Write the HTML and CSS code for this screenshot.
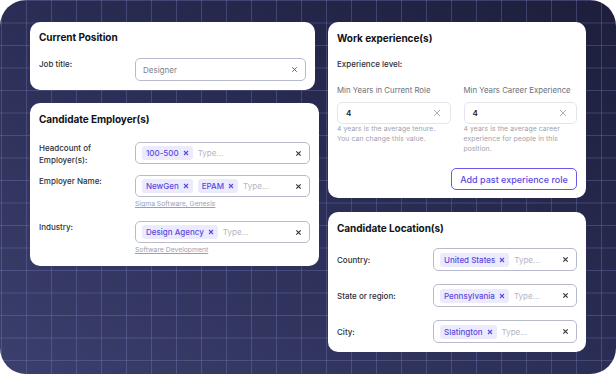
FILE: index.html
```html
<!DOCTYPE html>
<html>
<head>
<meta charset="utf-8">
<link rel="stylesheet" href="styles.css">
</head>
<body>
<div class="frame">
  <div class="col col-left">
    <section class="card card-pos">
      <h2 class="title">Current Position</h2>
      <div class="row row-top">
        <div class="label">Job title:</div>
        <div class="field">
          <div class="input input-tall">
            <span class="value-grey">Designer</span>
            <svg class="clear clear-light" viewBox="0 0 8 8"><path d="M1.5 1.5l5 5M6.5 1.5l-5 5"/></svg>
          </div>
        </div>
      </div>
    </section>
    <section class="card card-emp">
      <h2 class="title">Candidate Employer(s)</h2>
      <div class="row row-top r1">
        <div class="label">Headcount of<br>Employer(s):</div>
        <div class="field">
          <div class="input">
            <span class="chip">100-500<svg class="chip-x" viewBox="0 0 6 6"><path d="M1 1l4 4M5 1l-4 4"/></svg></span>
            <span class="ph">Type...</span>
            <svg class="clear" viewBox="0 0 8 8"><path d="M1.5 1.5l5 5M6.5 1.5l-5 5"/></svg>
          </div>
        </div>
      </div>
      <div class="row row-top r2">
        <div class="label">Employer Name:</div>
        <div class="field">
          <div class="input">
            <span class="chip">NewGen<svg class="chip-x" viewBox="0 0 6 6"><path d="M1 1l4 4M5 1l-4 4"/></svg></span>
            <span class="chip">EPAM<svg class="chip-x" viewBox="0 0 6 6"><path d="M1 1l4 4M5 1l-4 4"/></svg></span>
            <span class="ph">Type...</span>
            <svg class="clear" viewBox="0 0 8 8"><path d="M1.5 1.5l5 5M6.5 1.5l-5 5"/></svg>
          </div>
          <div class="suggest">Sigma Software, Genesis</div>
        </div>
      </div>
      <div class="row row-top r3">
        <div class="label">Industry:</div>
        <div class="field">
          <div class="input">
            <span class="chip">Design Agency<svg class="chip-x" viewBox="0 0 6 6"><path d="M1 1l4 4M5 1l-4 4"/></svg></span>
            <span class="ph">Type...</span>
            <svg class="clear" viewBox="0 0 8 8"><path d="M1.5 1.5l5 5M6.5 1.5l-5 5"/></svg>
          </div>
          <div class="suggest">Software Development</div>
        </div>
      </div>
    </section>
  </div>
  <div class="col col-right">
    <section class="card card-work">
      <h2 class="title">Work experience(s)</h2>
      <div class="level">Experience level:</div>
      <div class="years">
        <div class="ycol">
          <div class="ylabel">Min Years in Current Role</div>
          <div class="input input-soft">
            <span class="value">4</span>
            <svg class="clear-thin" viewBox="0 0 8 8"><path d="M1 1l6 6M7 1l-6 6"/></svg>
          </div>
          <div class="hint">4 years is the average tenure.<br>You can change this value.</div>
        </div>
        <div class="ycol">
          <div class="ylabel">Min Years Career Experience</div>
          <div class="input input-soft">
            <span class="value">4</span>
            <svg class="clear-thin" viewBox="0 0 8 8"><path d="M1 1l6 6M7 1l-6 6"/></svg>
          </div>
          <div class="hint">4 years is the average career<br>experience for people in this<br>position.</div>
        </div>
      </div>
      <div class="actions">
        <button class="btn">Add past experience role</button>
      </div>
    </section>
    <section class="card card-loc">
      <h2 class="title">Candidate Location(s)</h2>
      <div class="row row-mid">
        <div class="label">Country:</div>
        <div class="input input-tall">
          <span class="chip">United States<svg class="chip-x" viewBox="0 0 6 6"><path d="M1 1l4 4M5 1l-4 4"/></svg></span>
          <span class="ph">Type...</span>
          <svg class="clear" viewBox="0 0 8 8"><path d="M1.5 1.5l5 5M6.5 1.5l-5 5"/></svg>
        </div>
      </div>
      <div class="row row-mid">
        <div class="label">State or region:</div>
        <div class="input input-tall">
          <span class="chip">Pennsylvania<svg class="chip-x" viewBox="0 0 6 6"><path d="M1 1l4 4M5 1l-4 4"/></svg></span>
          <span class="ph">Type...</span>
          <svg class="clear" viewBox="0 0 8 8"><path d="M1.5 1.5l5 5M6.5 1.5l-5 5"/></svg>
        </div>
      </div>
      <div class="row row-mid">
        <div class="label">City:</div>
        <div class="input input-tall">
          <span class="chip">Slatington<svg class="chip-x" viewBox="0 0 6 6"><path d="M1 1l4 4M5 1l-4 4"/></svg></span>
          <span class="ph">Type...</span>
          <svg class="clear" viewBox="0 0 8 8"><path d="M1.5 1.5l5 5M6.5 1.5l-5 5"/></svg>
        </div>
      </div>
    </section>
  </div>
</div>
</body>
</html>
```

FILE: styles.css
```css
* { box-sizing: border-box; }
html, body { margin: 0; padding: 0; background: #ffffff; }
body { font-family: Inter, "Noto Sans", sans-serif; color: #1b1c22; }

.frame {
  width: 616px;
  height: 374px;
  border-radius: 26px;
  overflow: hidden;
  display: flex;
  gap: 9px;
  padding: 22px 0 0 30px;
  background-color: #2a2c52;
  background-image:
    linear-gradient(to right, rgba(128, 133, 196, 0.32) 1px, transparent 1px),
    linear-gradient(to bottom, rgba(128, 133, 196, 0.32) 1px, transparent 1px),
    linear-gradient(to top right, #3b3f6c 0%, #2c2f57 45%, #1c1e3b 100%);
  background-size: 25px 22.5px, 25px 22.5px, 100% 100%;
  background-position: 1px 0, 0 0, 0 0;
}

.col { display: flex; flex-direction: column; align-items: flex-start; }
.col-left { width: 289px; gap: 13px; }
.col-right { width: 258px; gap: 14px; }

.card {
  background: #ffffff;
  border-radius: 10px;
  padding: 9px 9px 9px 9px;
  width: 100%;
}
.card-pos { width: 285px; padding-top: 8px; }
.card-emp { padding-bottom: 11px; }
.card-work { padding-bottom: 8px; }

.title {
  margin: 0;
  font-size: 10px;
  line-height: 14px;
  font-weight: 700;
  color: #111216;
  letter-spacing: -0.05px;
}

.row { display: flex; }
.row-top { align-items: flex-start; }
.row-mid { align-items: center; margin-top: 13px; }
.card-pos .row { margin-top: 14px; }
.r1 { margin-top: 16px; }
.r2 { margin-top: 9px; }
.r3 { margin-top: 12px; }

.label {
  width: 96px;
  flex: none;
  font-size: 8px;
  line-height: 12px;
  font-weight: 500;
  color: #2d2f38;
}
.field { flex: 1; min-width: 0; }

.input {
  height: 22px;
  border: 1px solid #b8bacb;
  border-radius: 5px;
  display: flex;
  align-items: center;
  padding: 0 6px 0 6px;
  gap: 5px;
  flex: 1;
  min-width: 0;
}
.input-tall { height: 23px; }

.value-grey { font-size: 8px; color: #7c7f8b; flex: 1; padding-left: 1px; }
.value { font-size: 8px; font-weight: 600; color: #222; flex: 1; padding-left: 2px; }

.chip {
  display: inline-flex;
  align-items: center;
  gap: 4px;
  height: 14px;
  padding: 0 4px 0 4px;
  background: #ecebfd;
  border-radius: 3px;
  color: #5b48de;
  font-size: 8px;
  font-weight: 500;
  white-space: nowrap;
}
.chip-x { width: 6px; height: 6px; stroke: #5b48de; stroke-width: 1.1; fill: none; }

.ph { font-size: 8px; color: #b3b5c4; flex: 1; }

.clear { width: 7px; height: 7px; stroke: #2a2b33; stroke-width: 1.2; fill: none; flex: none; margin-right: 1px; }
.clear-light { stroke: #55575f; stroke-width: 1.1; }
.clear-thin { width: 8px; height: 8px; stroke: #9a9caa; stroke-width: 0.8; fill: none; flex: none; margin-right: 3px; }

.suggest {
  margin-top: 2px;
  font-size: 6.8px;
  line-height: 10px;
  color: #9a9fb6;
  text-decoration: underline;
  text-underline-offset: 1px;
}

.level {
  margin-top: 13px;
  font-size: 8px;
  line-height: 12px;
  font-weight: 500;
  color: #2d2f38;
}
.years { display: flex; gap: 13px; margin-top: 14px; }
.ycol { flex: 1; min-width: 0; }
.ylabel { font-size: 7.8px; line-height: 12px; color: #6c707e; white-space: nowrap; }
.input-soft { border-color: #e4e5ec; margin-top: 6px; padding-left: 6px; }
.hint { font-size: 6.8px; line-height: 10px; color: #9ea1ae; letter-spacing: 0.1px; }

.actions { display: flex; justify-content: flex-end; margin-top: 14px; }
.btn {
  height: 22px;
  width: 126px;
  border: 1px solid #6b58e6;
  border-radius: 5px;
  background: #ffffff;
  color: #5b48de;
  font-family: Inter, "Noto Sans", sans-serif;
  font-size: 9px;
  font-weight: 500;
  padding: 0;
}
```
